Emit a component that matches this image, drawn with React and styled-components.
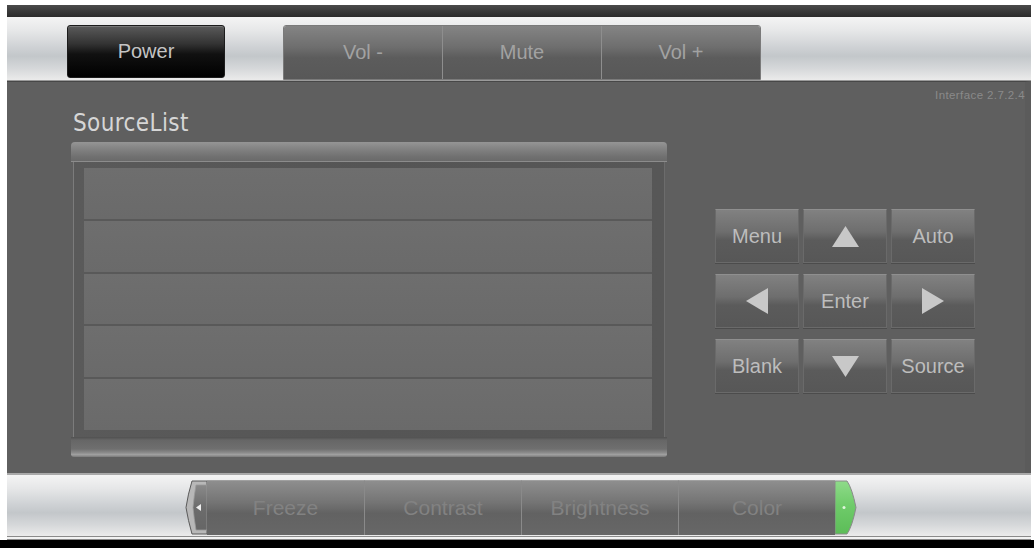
import React from 'react';
import styled, { createGlobalStyle } from 'styled-components';

const GlobalStyle = createGlobalStyle`
  html, body {
    margin: 0;
    padding: 0;
    background: #fff;
  }
  body {
    font-family: 'Liberation Sans', Arial, sans-serif;
  }
`;

const silver = `linear-gradient(180deg, #f4f4f4 0%, #e6e7e8 22%, #cdd0d3 50%, #c3c7ca 62%, #d6d8da 82%, #ebebeb 100%)`;

const Frame = styled.div`
  width: 1024px;
  margin: 5px 0 0 7px;
  display: flex;
  flex-direction: column;
`;

const TopEdge = styled.div`
  height: 12px;
  background: linear-gradient(180deg, #4a4a4a, #2b2b2b);
`;

const TopBar = styled.div`
  height: 64px;
  box-sizing: border-box;
  padding: 8px 0 0 60px;
  background: ${silver};
  border-bottom: 1px solid #9a9a9a;
  display: flex;
  align-items: flex-start;
`;

const PowerButton = styled.div`
  width: 158px;
  height: 53px;
  box-sizing: border-box;
  border: 1px solid #1c1c1c;
  border-radius: 3px;
  background: linear-gradient(180deg, #5a5a5a 0%, #333 35%, #111 55%, #000 100%);
  box-shadow: inset 0 1px 0 #777;
  color: #c4c4c4;
  font-size: 20px;
  display: flex;
  align-items: center;
  justify-content: center;
`;

const VolumeGroup = styled.div`
  margin-left: 58px;
  height: 53px;
  display: flex;
  border: 1px solid #7a7a7a;
  border-radius: 3px 3px 0 0;
  overflow: hidden;
`;

const VolumeButton = styled.div`
  width: 158px;
  height: 100%;
  background: linear-gradient(180deg, #848484 0%, #6e6e6e 40%, #5c5c5c 60%, #585858 100%);
  border-left: ${(p) => (p.$first ? 'none' : '1px solid #8e8e8e')};
  color: #a2a2a2;
  font-size: 20px;
  display: flex;
  align-items: center;
  justify-content: center;
`;

const Main = styled.div`
  height: 392px;
  box-sizing: border-box;
  background: #5f5f5f;
  border-top: 1px solid #474747;
  border-right: 6px solid #5b5b5b;
  display: flex;
  flex-direction: column;
`;

const VersionRow = styled.div`
  height: 12px;
  padding: 7px 0 0 0;
  text-align: right;
  font-size: 11.5px;
  line-height: 12px;
  color: #8a8a8a;
  letter-spacing: 0.4px;
`;

const Content = styled.div`
  display: flex;
  padding-left: 64px;
`;

const LeftColumn = styled.div`
  display: flex;
  flex-direction: column;
`;

const Title = styled.div`
  margin: 9px 0 6px 2px;
  height: 26px;
  line-height: 26px;
  font-family: 'DejaVu Sans Condensed', 'DejaVu Sans', Verdana, sans-serif;
  font-stretch: condensed;
  font-size: 24px;
  letter-spacing: 0.4px;
  color: #d6d6d6;
`;

const List = styled.div`
  width: 596px;
  display: flex;
  flex-direction: column;
`;

const TopRail = styled.div`
  height: 19px;
  border-radius: 4px 4px 0 0;
  background: linear-gradient(180deg, #959595 0%, #838383 35%, #717171 75%, #6a6a6a 100%);
  border-bottom: 1px solid #8c8c8c;
`;

const ListBody = styled.div`
  margin: 0 2px;
  height: 275px;
  box-sizing: border-box;
  padding: 6px 12px 7px 10px;
  background: linear-gradient(90deg, #5a5a5a, #555 50%, #575757);
  border-left: 1px solid #7c7c7c;
  border-right: 1px solid #6c6c6c;
  display: flex;
  flex-direction: column;
`;

const Row = styled.div`
  flex: 1;
  background: linear-gradient(180deg, #6e6e6e, #6a6a6a);
  border-bottom: ${(p) => (p.$last ? 'none' : '2px solid #595959')};
`;

const BottomRail = styled.div`
  height: 20px;
  border-radius: 0 0 3px 3px;
  background: linear-gradient(180deg, #505050 0%, #666 15%, #6f6f6f 60%, #8a8a8a 78%, #a0a0a0 88%, #7a7a7a 100%);
`;

const DPad = styled.div`
  margin: 108px 0 0 48px;
  display: grid;
  grid-template-columns: repeat(3, 84px);
  grid-auto-rows: 54px;
  column-gap: 4px;
  row-gap: 11px;
  align-self: flex-start;
`;

const PadButton = styled.div`
  box-sizing: border-box;
  background: linear-gradient(180deg, #818181 0%, #6e6e6e 42%, #5b5b5b 58%, #575757 100%);
  border: 1px solid #6a6a6a;
  border-top-color: #8f8f8f;
  box-shadow: 0 1px 0 #4c4c4c;
  color: #bdbdbd;
  font-size: 20px;
  display: flex;
  align-items: center;
  justify-content: center;
`;

const BottomBar = styled.div`
  height: 67px;
  box-sizing: border-box;
  padding: 5px 0 0 178px;
  background: ${silver};
  border-top: 2px solid #a9a9a9;
  border-bottom: 4px double #8a8a8a;
  display: flex;
  align-items: flex-start;
`;

const Strip = styled.div`
  display: flex;
  height: 55px;
`;

const StripButton = styled.div`
  width: 157px;
  height: 100%;
  box-sizing: border-box;
  background: linear-gradient(180deg, #8e8e8e 0%, #747474 40%, #626262 60%, #676767 100%);
  border-top: 1px solid #a0a0a0;
  border-left: ${(p) => (p.$first ? 'none' : '1px solid #8a8a8a')};
  color: #828282;
  font-size: 21px;
  display: flex;
  align-items: center;
  justify-content: center;
`;

const BlackEdge = styled.div`
  height: 8px;
  background: #000;
  margin-left: -7px;
  width: 1034px;
`;

const Tri = ({ dir }) => {
  const pts = {
    up: '0,21 13.5,0 27,21',
    down: '0,0 27,0 13.5,21',
    left: '22,0 22,26 0,13',
    right: '0,0 0,26 22,13',
  }[dir];
  const w = dir === 'up' || dir === 'down' ? 27 : 22;
  const h = dir === 'up' || dir === 'down' ? 21 : 26;
  return (
    <svg width={w} height={h} viewBox={`0 0 ${w} ${h}`}>
      <polygon points={pts} fill="#c8c8c8" />
    </svg>
  );
};

const LeftTab = () => (
  <svg width="22" height="55" viewBox="0 0 22 55">
    <defs>
      <linearGradient id="lt" x1="0" y1="0" x2="0" y2="1">
        <stop offset="0" stopColor="#8a8a8a" />
        <stop offset="0.5" stopColor="#6c6c6c" />
        <stop offset="1" stopColor="#666" />
      </linearGradient>
    </defs>
    <path d="M7 1 H22 V54 H7 Q3 40 1 27.5 Q3 14 7 1 Z" fill="#b8b8b8" stroke="#5a5a5a" strokeWidth="1" />
    <path d="M11 5 H22 V50 H11 Q9 38 8 27.5 Q9 16 11 5 Z" fill="url(#lt)" stroke="#9a9a9a" strokeWidth="0.8" />
    <polygon points="16,24 16,31 11,27.5" fill="#eee" />
  </svg>
);

const RightTab = () => (
  <svg width="22" height="55" viewBox="0 0 22 55">
    <defs>
      <linearGradient id="rt" x1="0" y1="0" x2="0" y2="1">
        <stop offset="0" stopColor="#8fdb8a" />
        <stop offset="0.45" stopColor="#6fcb6a" />
        <stop offset="1" stopColor="#5cbd58" />
      </linearGradient>
    </defs>
    <path d="M0 1 H12 Q17 8 21 27.5 Q17 47 12 54 H0 Z" fill="url(#rt)" stroke="#8a8a8a" strokeWidth="1" />
    <circle cx="9" cy="27.5" r="1.5" fill="#dff5dc" />
  </svg>
);

const padKeys = [
  { label: 'Menu' },
  { icon: 'up' },
  { label: 'Auto' },
  { icon: 'left' },
  { label: 'Enter' },
  { icon: 'right' },
  { label: 'Blank' },
  { icon: 'down' },
  { label: 'Source' },
];

const volumeKeys = ['Vol -', 'Mute', 'Vol +'];
const pictureKeys = ['Freeze', 'Contrast', 'Brightness', 'Color'];

export default function App() {
  return (
    <>
      <GlobalStyle />
      <Frame>
        <TopEdge />
        <TopBar>
          <PowerButton>Power</PowerButton>
          <VolumeGroup>
            {volumeKeys.map((k, i) => (
              <VolumeButton key={k} $first={i === 0}>
                {k}
              </VolumeButton>
            ))}
          </VolumeGroup>
        </TopBar>
        <Main>
          <VersionRow>Interface 2.7.2.4</VersionRow>
          <Content>
            <LeftColumn>
              <Title>SourceList</Title>
              <List>
                <TopRail />
                <ListBody>
                  {[0, 1, 2, 3, 4].map((i) => (
                    <Row key={i} $last={i === 4} />
                  ))}
                </ListBody>
                <BottomRail />
              </List>
            </LeftColumn>
            <DPad>
              {padKeys.map((k, i) => (
                <PadButton key={i}>{k.icon ? <Tri dir={k.icon} /> : k.label}</PadButton>
              ))}
            </DPad>
          </Content>
        </Main>
        <BottomBar>
          <Strip>
            <LeftTab />
            {pictureKeys.map((k, i) => (
              <StripButton key={k} $first={i === 0}>
                {k}
              </StripButton>
            ))}
            <RightTab />
          </Strip>
        </BottomBar>
        <BlackEdge />
      </Frame>
    </>
  );
}
